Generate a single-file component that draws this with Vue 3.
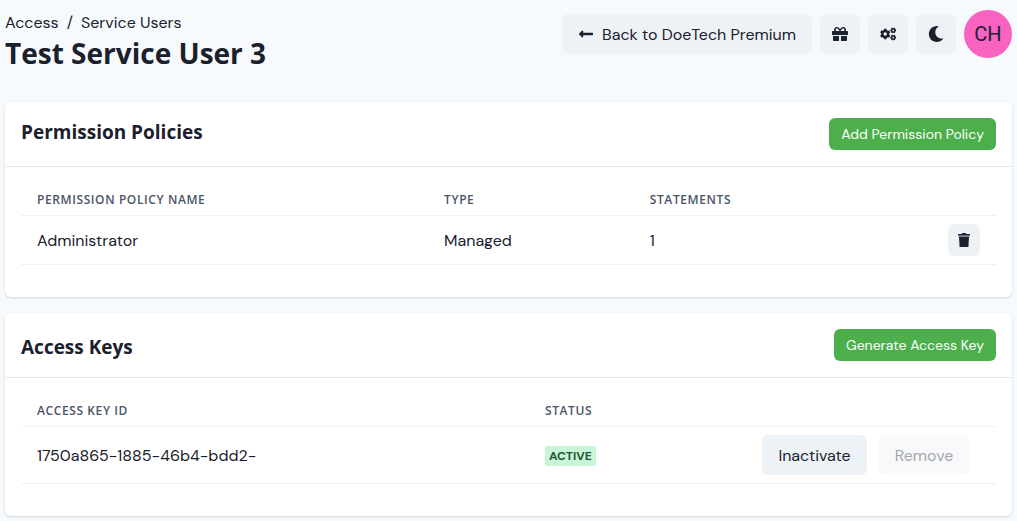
<script setup>
const policies = [{ name: 'Administrator', type: 'Managed', statements: 1 }]
const keys = [{ id: '1750a865-1885-46b4-bdd2-', status: 'Active' }]
const teeth = [0, 60, 120]
const smallGears = [112, 400]
</script>

<template>
  <main class="page">
    <header class="topbar">
      <div class="heading">
        <nav class="crumbs" aria-label="Breadcrumb">
          <a href="#">Access</a>
          <span>/</span>
          <a href="#">Service Users</a>
        </nav>
        <h1>Test Service User 3</h1>
      </div>
      <div class="tools">
        <a class="btn back" href="#">
          <svg class="arrow" viewBox="0 0 448 512" aria-hidden="true"><path d="M134.059 296H436c6.627 0 12-5.373 12-12v-56c0-6.627-5.373-12-12-12H134.059v-46.059c0-21.382-25.851-32.09-40.971-16.971L7.029 239.029c-9.373 9.373-9.373 24.569 0 33.941l86.059 86.059c15.119 15.119 40.971 4.411 40.971-16.971V296z" /></svg>
          Back to DoeTech Premium
        </a>
        <button class="btn square" type="button" aria-label="Rewards">
          <svg class="icon" viewBox="0 0 512 512" aria-hidden="true"><path d="M32 448c0 17.7 14.3 32 32 32h160V320H32v128zm256 32h160c17.7 0 32-14.3 32-32V320H288v160zm192-320h-42.1c6.2-12.1 10.1-25.5 10.1-40 0-48.5-39.5-88-88-88-41.6 0-68.5 21.3-103 68.3-34.5-47-61.4-68.3-103-68.3-48.5 0-88 39.5-88 88 0 14.5 3.8 27.9 10.1 40H32c-17.7 0-32 14.3-32 32v80c0 8.8 7.2 16 16 16h480c8.8 0 16-7.2 16-16v-80c0-17.7-14.3-32-32-32zm-326.1 0c-22.1 0-40-17.9-40-40s17.9-40 40-40c19.9 0 34.6 3.3 86.1 80h-86.1zm206.1 0h-86.1c51.4-76.5 65.7-80 86.1-80 22.1 0 40 17.9 40 40s-17.9 40-40 40z" /></svg>
        </button>
        <button class="btn square" type="button" aria-label="Settings">
          <svg class="icon" viewBox="0 0 640 512" aria-hidden="true">
            <g fill="none" stroke="currentColor">
              <circle cx="208" cy="256" r="118" stroke-width="100" />
              <path v-for="a in teeth" :key="a" d="M208 50v70M208 392v70" stroke-width="100" :transform="`rotate(${a} 208 256)`" />
              <g v-for="y in smallGears" :key="y">
                <circle cx="528" :cy="y" r="66" stroke-width="64" />
                <path v-for="a in teeth" :key="a" :d="`M528 ${y - 112}v40M528 ${y + 72}v40`" stroke-width="64" :transform="`rotate(${a + 30} 528 ${y})`" />
              </g>
            </g>
          </svg>
        </button>
        <button class="btn square" type="button" aria-label="Dark mode">
          <svg class="icon" viewBox="0 0 512 512" aria-hidden="true"><path d="M283.211 512c78.962 0 151.079-35.925 198.857-94.792 7.068-8.708-.639-21.43-11.562-19.35-124.203 23.654-238.262-71.576-238.262-196.954 0-72.222 38.662-138.635 101.498-174.394 9.686-5.512 7.25-20.197-3.756-22.23A258.156 258.156 0 0 0 283.211 0c-141.309 0-256 114.511-256 256 0 141.309 114.511 256 256 256z" /></svg>
        </button>
        <button class="avatar" type="button">CH</button>
      </div>
    </header>

    <section class="card">
      <div class="card-head">
        <h2>Permission Policies</h2>
        <button class="btn primary" type="button">Add Permission Policy</button>
      </div>
      <div class="card-body">
        <table class="policies">
          <thead>
            <tr><th class="name">Permission Policy Name</th><th class="type">Type</th><th>Statements</th><td></td></tr>
          </thead>
          <tbody>
            <tr v-for="p in policies" :key="p.name">
              <td>{{ p.name }}</td>
              <td>{{ p.type }}</td>
              <td>{{ p.statements }}</td>
              <td class="controls">
                <div class="actions end">
                  <button class="btn small" type="button" aria-label="Delete policy">
                    <svg class="trash" viewBox="0 0 14 16" aria-hidden="true">
                      <path d="M1 2h3.500l1-1h3l1 1H13v1.500H1z" />
                      <path d="M1.500 3.500h11V5h-11z" opacity="0.5" />
                      <path d="M2 5h10l-.6 10H2.600z" />
                    </svg>
                  </button>
                </div>
              </td>
            </tr>
          </tbody>
        </table>
      </div>
    </section>

    <section class="card">
      <div class="card-head low">
        <h2>Access Keys</h2>
        <button class="btn primary" type="button">Generate Access Key</button>
      </div>
      <div class="card-body">
        <table class="keys">
          <thead>
            <tr><th class="key">Access Key ID</th><th class="status">Status</th><td></td></tr>
          </thead>
          <tbody>
            <tr v-for="k in keys" :key="k.id">
              <td>{{ k.id }}</td>
              <td class="controls"><span class="badge">{{ k.status }}</span></td>
              <td class="controls">
                <div class="actions">
                  <button class="btn" type="button">Inactivate</button>
                  <button class="btn" type="button" disabled>Remove</button>
                </div>
              </td>
            </tr>
          </tbody>
        </table>
      </div>
    </section>
  </main>
</template>

<style>
body {
  background: #f7fafc;
}
</style>

<style scoped>
* {
  box-sizing: border-box;
}
.page {
  padding: 10px 5px 4px;
  font: 400 16px/24px "DM Sans", Inter, sans-serif;
  color: #1a202c;
}
h1,
h2 {
  margin: 0;
  font-family: "Segoe UI", "Open Sans", "Noto Sans", sans-serif;
  font-weight: 700;
}
h1 {
  font-size: 28px;
  line-height: 36px;
}
h2 {
  font-size: 19px;
  line-height: 28px;
}
a {
  color: inherit;
  text-decoration: none;
}
.topbar {
  display: flex;
  justify-content: space-between;
  align-items: flex-start;
  margin-bottom: 31px;
}
.heading {
  padding-top: 1px;
}
.crumbs {
  display: flex;
  gap: 8px;
}
.tools {
  display: flex;
  align-items: center;
  gap: 8px;
}
.btn {
  display: flex;
  align-items: center;
  justify-content: center;
  height: 40px;
  padding: 0 16px;
  border: 0;
  border-radius: 6px;
  background: #edf2f7;
  color: #1a202c;
  font: inherit;
  line-height: 25px;
  white-space: nowrap;
}
.back {
  gap: 8px;
}
.square {
  width: 40px;
  padding: 0;
}
.small {
  width: 32px;
  height: 32px;
  padding: 0;
}
.primary {
  height: 32px;
  padding: 0 12px;
  background: #4caf4c;
  color: #fff;
  font-size: 14px;
  line-height: 24px;
}
.btn:disabled {
  opacity: 0.4;
}
svg {
  fill: currentColor;
}
.icon,
.arrow {
  width: 16px;
  height: 16px;
}
.trash {
  width: 14px;
  height: 16px;
}
.avatar {
  width: 48px;
  height: 48px;
  padding: 0;
  border: 0;
  border-radius: 50%;
  background: #f862c0;
  color: #1a202c;
  font: 400 20px/24px Roboto, Inter, sans-serif;
}
.card {
  margin-bottom: 16px;
  border-radius: 6px;
  background: #fff;
  box-shadow: 0 1px 3px rgba(0, 0, 0, 0.1), 0 1px 2px rgba(0, 0, 0, 0.06);
}
.card:last-child {
  margin-bottom: 0;
}
.card-head {
  display: flex;
  justify-content: space-between;
  align-items: flex-start;
  padding: 16px;
  border-bottom: 1px solid #e2e8f0;
}
.card-head.low {
  align-items: flex-end;
}
.card-body {
  padding: 16px 16px 32px;
}
table {
  width: 100%;
  table-layout: fixed;
  border-collapse: separate;
  border-spacing: 0;
}
th,
td {
  padding: 9px 16px 7px;
  border-bottom: 1px solid #edf2f7;
  text-align: left;
}
.controls {
  padding: 8px 16px;
}
thead th,
thead td {
  font: 600 12px/16px "Segoe UI", "Open Sans", "Noto Sans", sans-serif;
  letter-spacing: 0.05em;
  text-transform: uppercase;
  color: #4a5568;
}
.name {
  width: 41.75%;
}
.type {
  width: 21.1%;
}
.key {
  width: 52.1%;
}
.status {
  width: 22.3%;
}
.actions {
  display: flex;
  gap: 12px;
}
.actions.end {
  justify-content: flex-end;
}
.badge {
  display: inline-block;
  padding: 0 4px;
  border-radius: 2px;
  background: #c6f6d5;
  color: #22543d;
  font-size: 12px;
  font-weight: 700;
  line-height: 20px;
  text-transform: uppercase;
  vertical-align: middle;
}
</style>
